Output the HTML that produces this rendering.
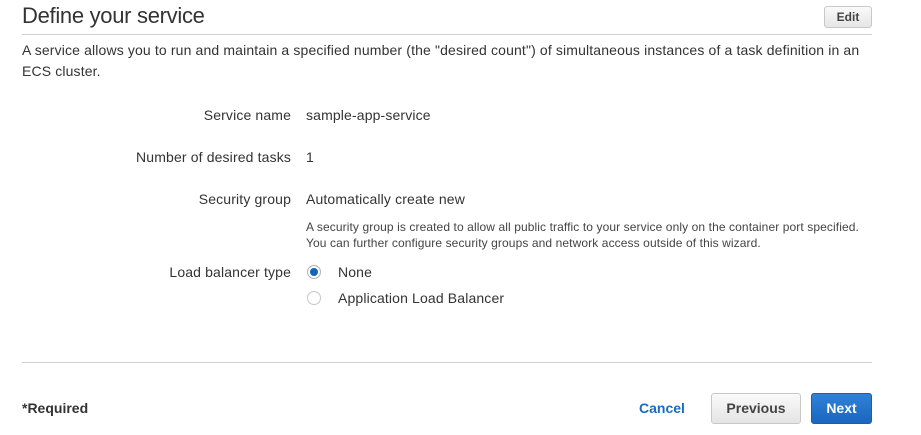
<!DOCTYPE html>
<html><head><style>
body{margin:0;width:921px;height:435px;background:#fff;font-family:"Liberation Sans",sans-serif;color:#333;position:relative;overflow:hidden}
.a{position:absolute;white-space:nowrap}
.lbl{position:absolute;right:630px;font-size:14px;color:#333;line-height:16px;letter-spacing:0.14px}
.val{position:absolute;left:306px;font-size:14px;line-height:16px;letter-spacing:0.14px}
.btn{position:absolute;border-radius:3px;font-weight:bold;font-size:14px;text-align:center;box-sizing:border-box}
.radio{position:absolute;width:14px;height:14px;border-radius:50%;box-sizing:border-box}
</style></head><body>
<div class="a" style="left:22px;top:3px;font-size:22px;color:#333;letter-spacing:-0.3px">Define your service</div>
<div class="btn" style="left:824px;top:6px;width:48px;height:22px;border:1px solid #c8c8c8;background:linear-gradient(#fafafa,#e6e6e6);font-size:12px;line-height:20px;color:#444">Edit</div>
<div class="a" style="left:22px;top:34px;width:850px;height:1px;background:#d0d0d0"></div>
<div class="a" style="left:22px;top:40px;font-size:14px;line-height:21px;white-space:normal;width:850px;letter-spacing:0.14px">A service allows you to run and maintain a specified number (the "desired count") of simultaneous instances of a task definition in an ECS cluster.</div>
<div class="lbl" style="top:107px">Service name</div><div class="val" style="top:107px">sample-app-service</div>
<div class="lbl" style="top:149px">Number of desired tasks</div><div class="val" style="top:149px">1</div>
<div class="lbl" style="top:191px">Security group</div><div class="val" style="top:191px">Automatically create new</div>
<div class="a" style="left:306px;top:219px;font-size:12px;line-height:16px;color:#444;letter-spacing:0.1px">A security group is created to allow all public traffic to your service only on the container port specified.<br>You can further configure security groups and network access outside of this wizard.</div>
<div class="lbl" style="top:264px">Load balancer type</div>
<div class="radio" style="left:307px;top:265px;border:1px solid #b0b0b0;background:#fff"><div style="position:absolute;left:2px;top:2px;width:8px;height:8px;border-radius:50%;background:#1166bb"></div></div>
<div class="val" style="left:338px;top:264px">None</div>
<div class="radio" style="left:307px;top:291px;border:1px solid #c8c8c8;background:#fff"></div>
<div class="val" style="left:338px;top:290px">Application Load Balancer</div>
<div class="a" style="left:22px;top:362px;width:850px;height:1px;background:#d0d0d0"></div>
<div class="a" style="left:22px;top:400px;font-size:14px;font-weight:bold;color:#333">*Required</div>
<div class="a" style="left:639px;top:400px;font-size:14px;font-weight:bold;color:#1a6bc2">Cancel</div>
<div class="btn" style="left:711px;top:393px;width:90px;height:31px;border:1px solid #c8c8c8;background:linear-gradient(#fafafa,#e4e4e4);line-height:29px;color:#444">Previous</div>
<div class="btn" style="left:811px;top:393px;width:61px;height:31px;border:1px solid #1a5fa8;background:linear-gradient(#2f82d6,#1a66c0);line-height:29px;color:#fff">Next</div>
</body></html>
